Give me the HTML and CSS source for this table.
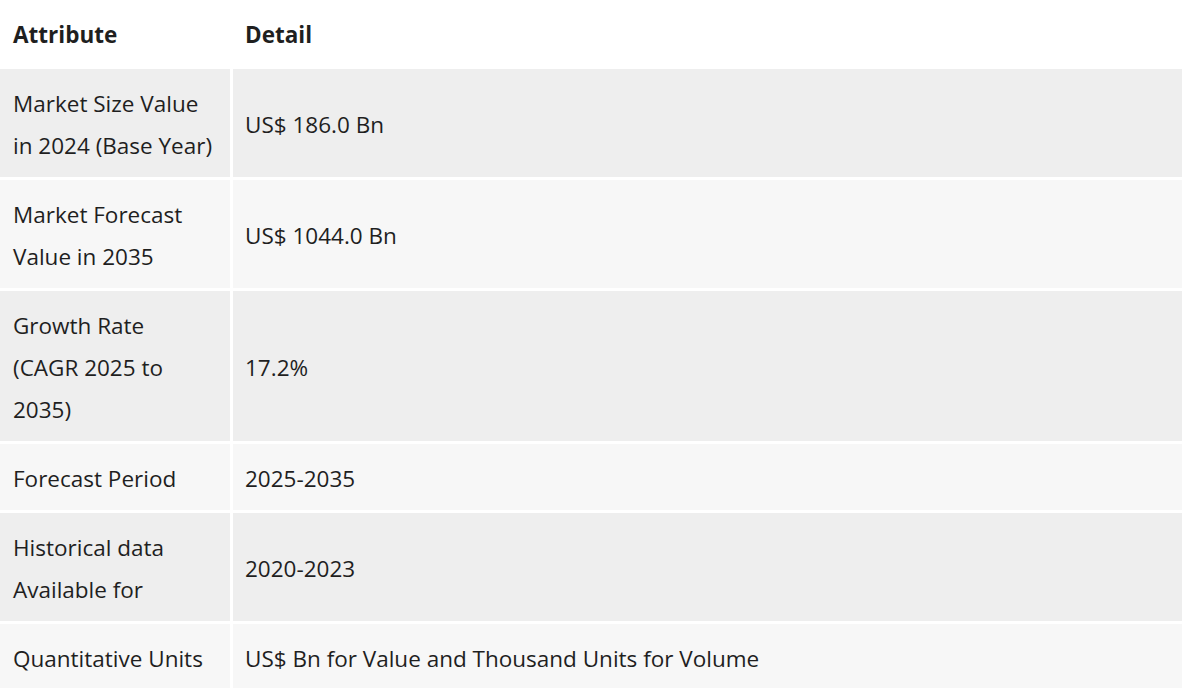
FILE: index.html
```html
<!DOCTYPE html>
<html>
<head>
<meta charset="utf-8">
<link rel="stylesheet" href="styles.css">
</head>
<body>
<table class="spec">
  <thead>
    <tr><th class="c1">Attribute</th><th class="c2">Detail</th></tr>
  </thead>
  <tbody>
    <tr class="odd"><td class="c1">Market Size Value in 2024 (Base Year)</td><td class="c2">US$ 186.0 Bn</td></tr>
    <tr class="even"><td class="c1">Market Forecast Value in 2035</td><td class="c2">US$ 1044.0 Bn</td></tr>
    <tr class="odd"><td class="c1">Growth Rate (CAGR 2025 to 2035)</td><td class="c2">17.2%</td></tr>
    <tr class="even"><td class="c1">Forecast Period</td><td class="c2">2025-2035</td></tr>
    <tr class="odd"><td class="c1">Historical data Available for</td><td class="c2">2020-2023</td></tr>
    <tr class="even"><td class="c1">Quantitative Units</td><td class="c2">US$ Bn for Value and Thousand Units for Volume</td></tr>
  </tbody>
</table>
</body>
</html>
```
FILE: styles.css
```css
html, body {
  margin: 0;
  padding: 0;
  background: #fff;
}
body {
  font-family: "Open Sans", "Noto Sans", sans-serif;
  font-size: 22.5px;
  line-height: 42px;
  color: #1f1f1f;
}
.spec {
  width: 1182px;
  border-collapse: collapse;
  table-layout: fixed;
}
.spec th, .spec td {
  padding: 14px 12px 10px 12px;
  text-align: left;
  vertical-align: middle;
}
.spec th {
  font-weight: 700;
}
.spec .c1 {
  width: 200.5px;
  padding-left: 13px;
  padding-right: 16.5px;
  border-right: 3px solid #fff;
}
.spec td {
  border-top: 3px solid #fff;
}
.spec tr.odd td { background: #eeeeee; }
.spec tr.even td { background: #f7f7f7; }
```
